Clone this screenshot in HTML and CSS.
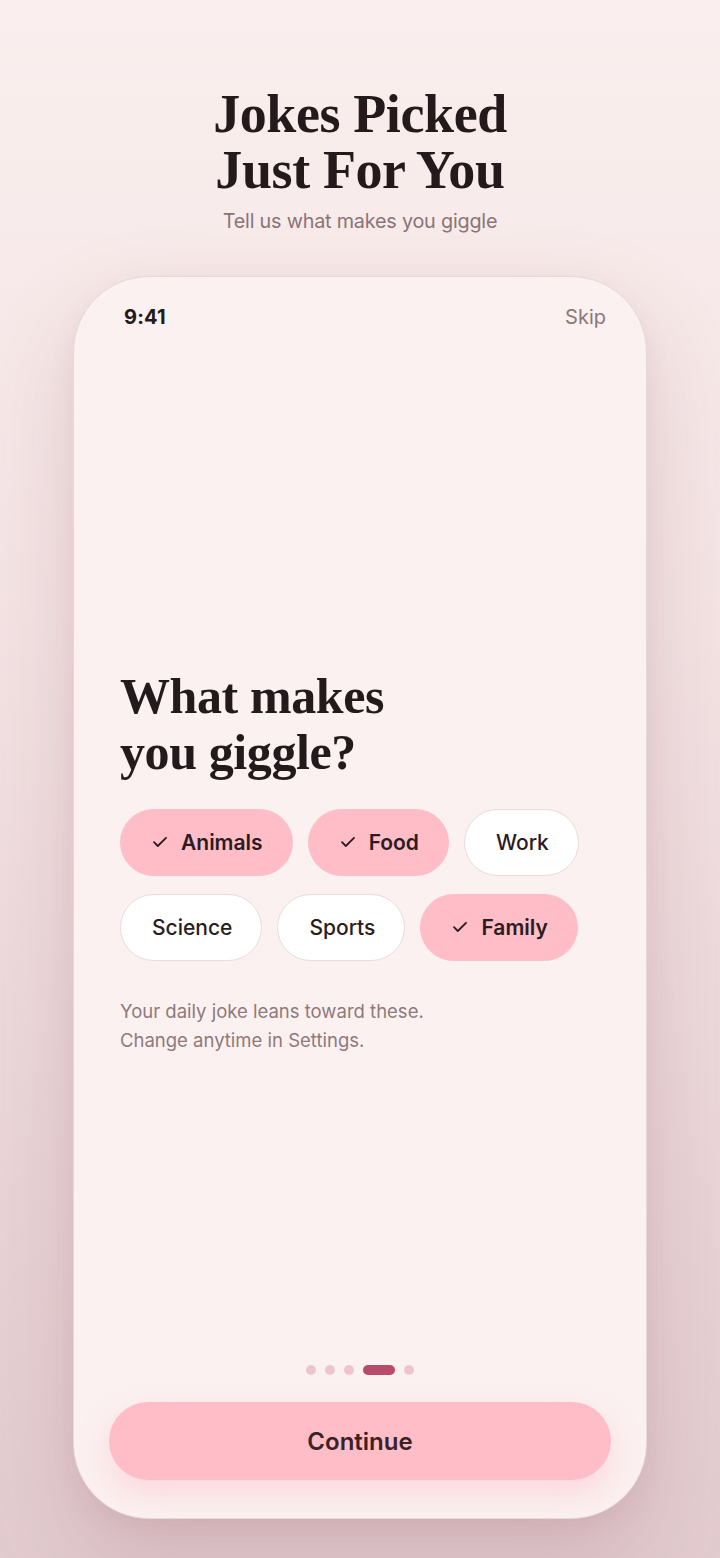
FILE: index.html
```html
<!DOCTYPE html>
<html lang="en">
<head>
<meta charset="utf-8">
<title>Jokes Picked Just For You</title>
<link rel="stylesheet" href="styles.css">
</head>
<body>
<div class="page">
  <header class="hero">
    <h1 class="hero-title">Jokes Picked<br>Just For You</h1>
    <p class="hero-sub">Tell us what makes you giggle</p>
  </header>
  <div class="phone">
    <div class="status">
      <span class="time">9:41</span>
      <span class="skip">Skip</span>
    </div>
    <main class="content">
      <h2 class="question">What makes<br>you giggle?</h2>
      <div class="chips">
        <button class="chip on"><svg class="check" viewBox="0 0 16 12" width="16" height="12"><path d="M2 6.2l3.8 3.8L14 1.8" fill="none" stroke="#2b1c1f" stroke-width="1.8" stroke-linecap="round" stroke-linejoin="round"/></svg>Animals</button>
        <button class="chip on"><svg class="check" viewBox="0 0 16 12" width="16" height="12"><path d="M2 6.2l3.8 3.8L14 1.8" fill="none" stroke="#2b1c1f" stroke-width="1.8" stroke-linecap="round" stroke-linejoin="round"/></svg>Food</button>
        <button class="chip">Work</button>
        <button class="chip">Science</button>
        <button class="chip">Sports</button>
        <button class="chip on"><svg class="check" viewBox="0 0 16 12" width="16" height="12"><path d="M2 6.2l3.8 3.8L14 1.8" fill="none" stroke="#2b1c1f" stroke-width="1.8" stroke-linecap="round" stroke-linejoin="round"/></svg>Family</button>
      </div>
      <p class="note">Your daily joke leans toward these.<br>Change anytime in Settings.</p>
    </main>
    <div class="dots">
      <span class="dot"></span>
      <span class="dot"></span>
      <span class="dot"></span>
      <span class="dot active"></span>
      <span class="dot"></span>
    </div>
    <button class="cta">Continue</button>
  </div>
</div>
</body>
</html>
```

FILE: styles.css
```css
* { box-sizing: border-box; }
html, body { margin: 0; padding: 0; }
body {
  width: 720px;
  height: 1558px;
  overflow: hidden;
  font-family: Inter, "Noto Sans", sans-serif;
  color: #2a1a1d;
  background: linear-gradient(180deg, #faefee 0%, #f4e3e4 40%, #e9d4d7 75%, #e2cbcf 100%);
}
.page {
  display: flex;
  flex-direction: column;
  align-items: center;
  padding-top: 86px;
}
.hero { text-align: center; }
.hero-title {
  margin: 0;
  font-family: "Liberation Serif", "DejaVu Serif", serif;
  font-weight: 700;
  font-size: 54px;
  line-height: 56px;
  letter-spacing: -0.4px;
  color: #241a1b;
}
.hero-sub {
  margin: 11px 0 0;
  font-size: 19.8px;
  line-height: 24px;
  color: #8a7478;
  letter-spacing: -0.2px;
}
.phone {
  margin-top: 43px;
  width: 574px;
  height: 1243px;
  border-radius: 76px;
  background: #fbf1f0;
  border: 1.5px solid #e6d8d8;
  box-shadow: 0 40px 90px rgba(150, 95, 105, 0.22), 0 8px 24px rgba(150, 95, 105, 0.08);
  display: flex;
  flex-direction: column;
  padding: 0 35px 38px;
}
.status {
  display: flex;
  justify-content: space-between;
  align-items: center;
  padding: 28px 5px 0 15px;
  height: 52px;
}
.time {
  font-size: 20px;
  font-weight: 700;
  color: #231a1c;
  letter-spacing: 0.2px;
}
.skip {
  font-size: 20px;
  color: #8c7679;
}
.content {
  flex: 1;
  display: flex;
  flex-direction: column;
  justify-content: center;
  padding: 28px 12px 0 11px;
}
.question {
  margin: 0;
  font-family: "Liberation Serif", "DejaVu Serif", serif;
  font-weight: 700;
  font-size: 50px;
  line-height: 56px;
  letter-spacing: -0.4px;
  color: #231a1c;
}
.chips {
  margin-top: 29px;
  display: flex;
  flex-wrap: wrap;
  column-gap: 15px;
  row-gap: 18px;
  width: 470px;
}
.chip {
  height: 67px;
  border-radius: 34px;
  padding: 0 29px 0 31px;
  display: inline-flex;
  align-items: center;
  gap: 13px;
  font-family: Inter, "Noto Sans", sans-serif;
  font-size: 21px;
  font-weight: 500;
  color: #2a1c1f;
  background: #ffffff;
  border: 1.5px solid #e8dcdc;
}
.chip.on {
  background: #ffbdc8;
  border-color: #ffbdc8;
  font-weight: 600;
}
.check { flex: none; }
.note {
  margin: 36px 0 0;
  font-size: 18.5px;
  line-height: 29px;
  color: #8f797c;
}
.dots {
  display: flex;
  justify-content: center;
  align-items: center;
  gap: 9px;
  margin-bottom: 27px;
}
.dot {
  width: 10px;
  height: 10px;
  border-radius: 5px;
  background: #edc6cd;
}
.dot.active {
  width: 32px;
  background: #b84b6b;
}
.cta {
  height: 78px;
  border-radius: 39px;
  border: none;
  background: #ffbdc8;
  font-family: Inter, "Noto Sans", sans-serif;
  font-size: 24px;
  font-weight: 600;
  color: #3a2226;
  box-shadow: 0 14px 30px rgba(255, 170, 185, 0.35);
}
```
